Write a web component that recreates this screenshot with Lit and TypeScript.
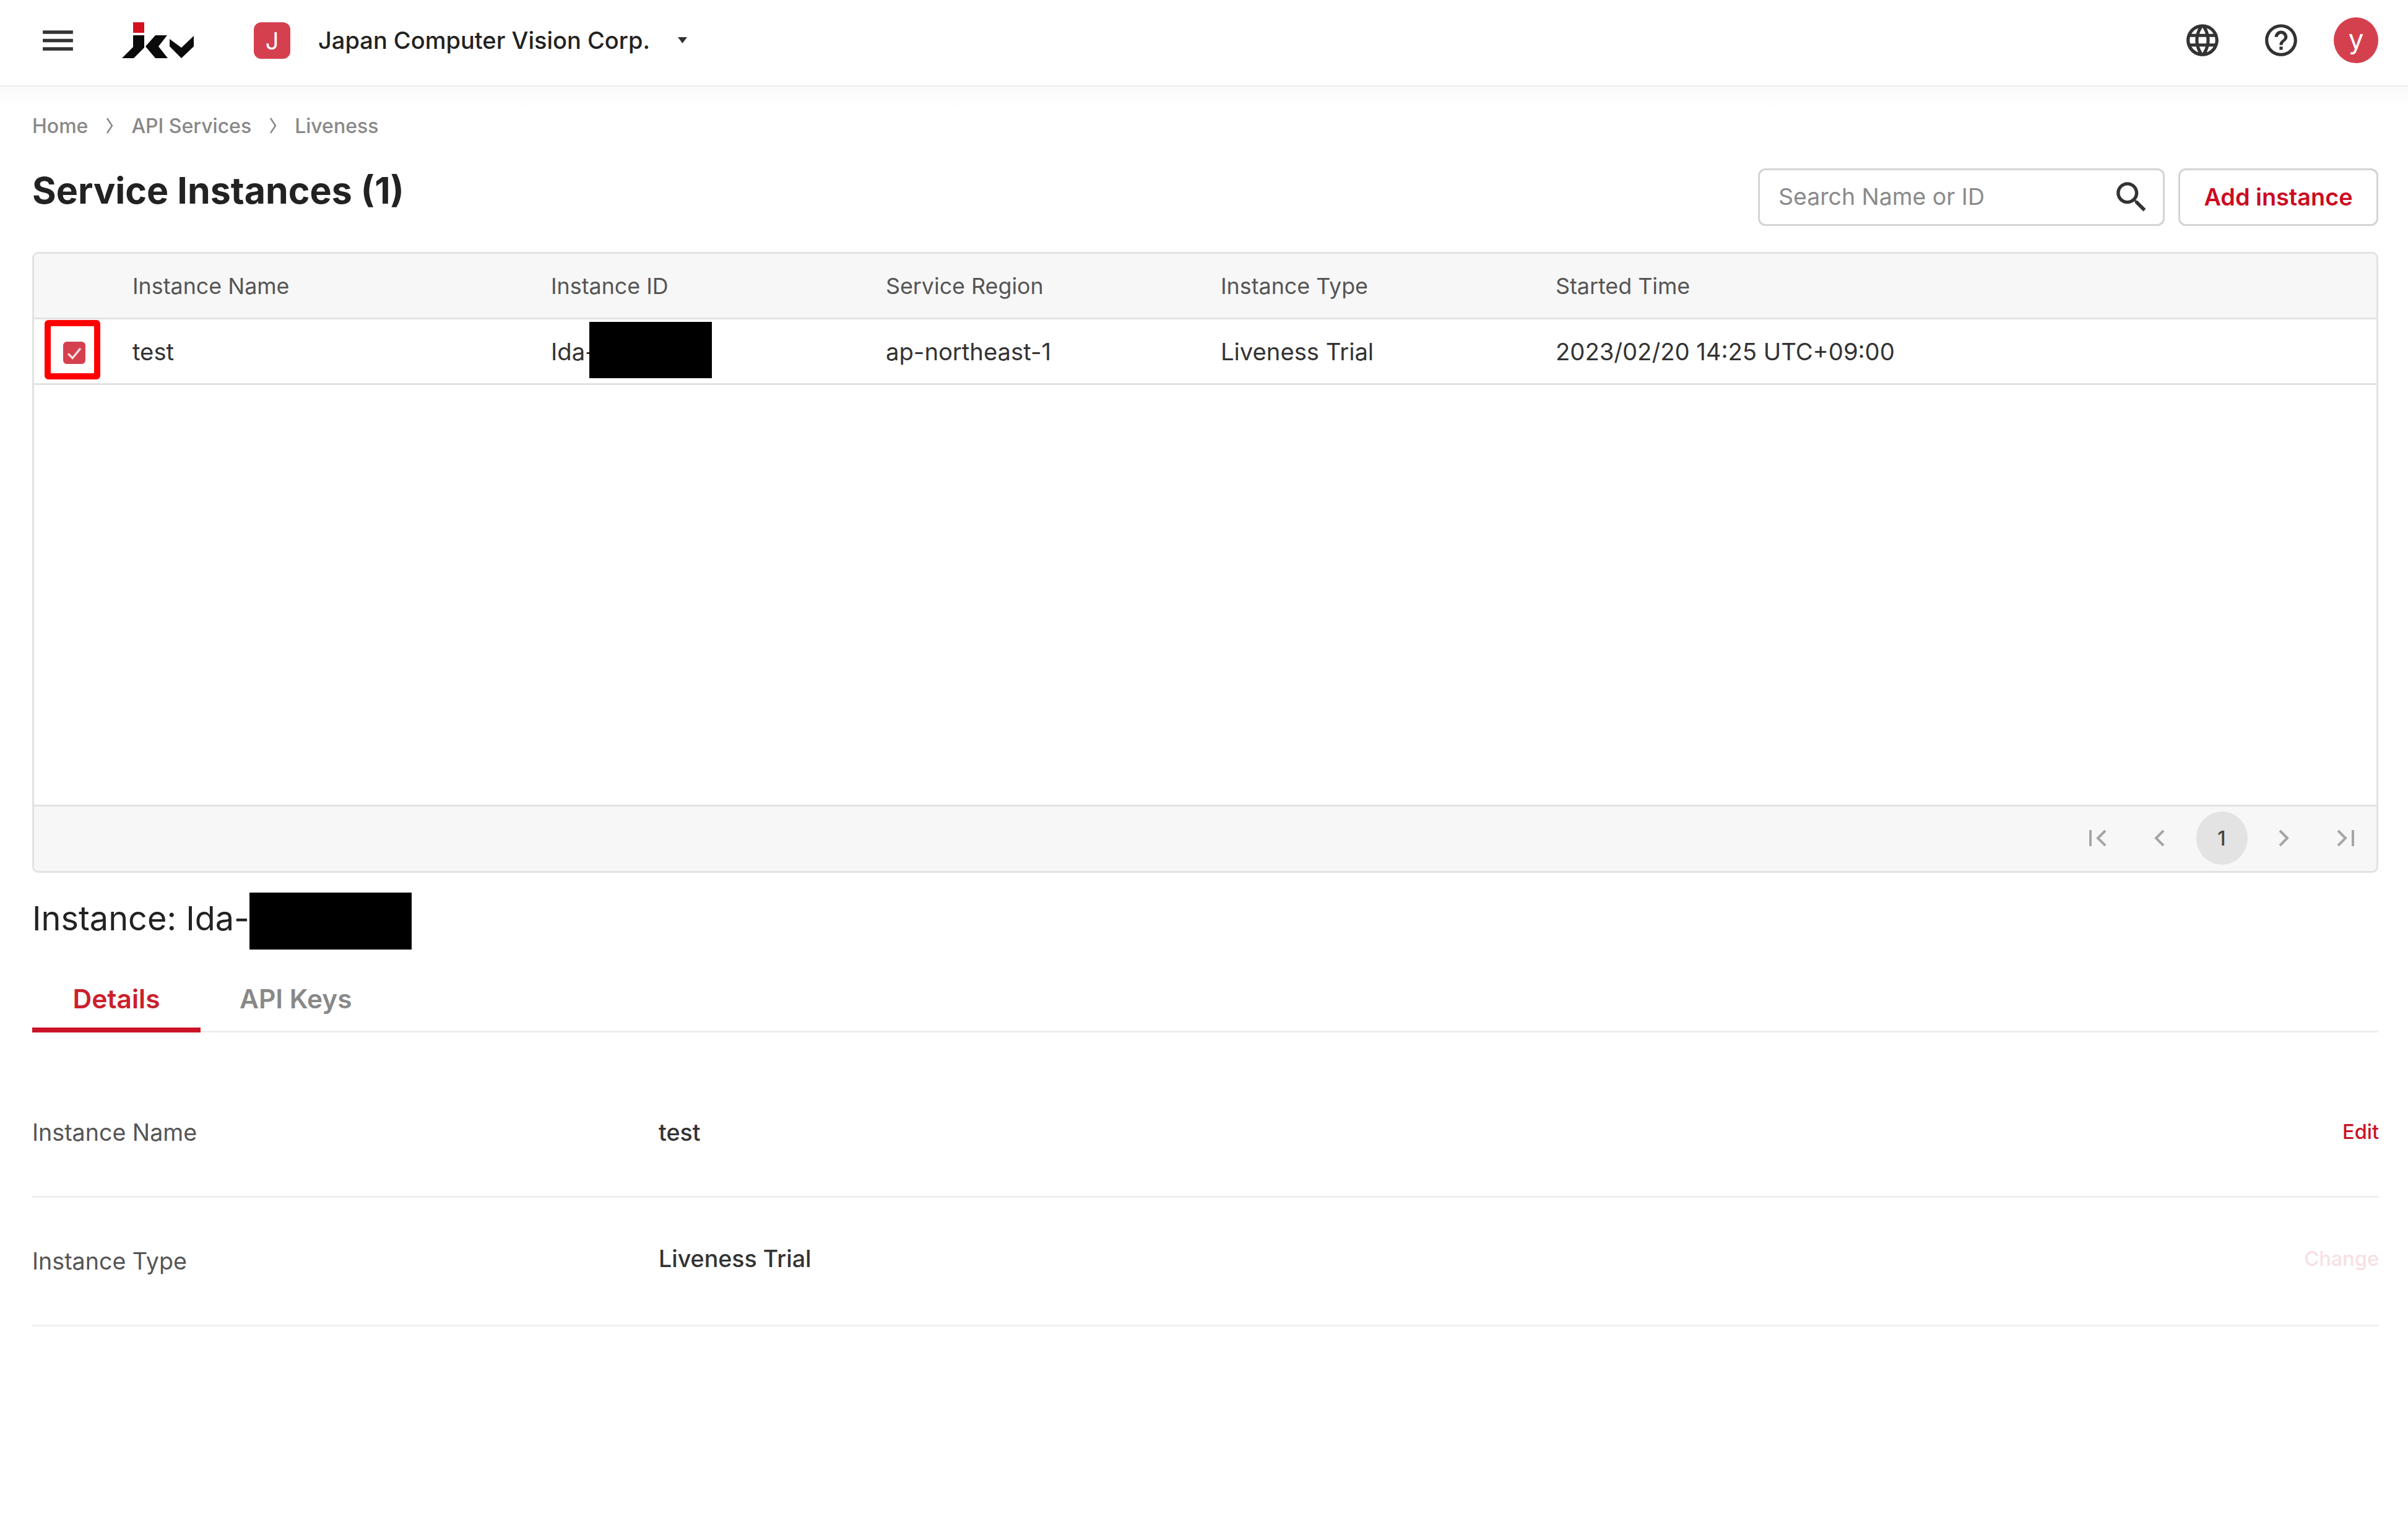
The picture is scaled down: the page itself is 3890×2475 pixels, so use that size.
import { LitElement, html, css, svg } from "lit";
import { customElement } from "lit/decorators.js";

const icon = (d: string, cls: string) =>
  html`<svg class=${cls} viewBox="0 0 24 24" aria-hidden="true"><path d=${d}></path></svg>`;

const MENU = "M3 18h18v-2H3v2zm0-5h18v-2H3v2zm0-7v2h18V6H3z";
const GLOBE = "M11.99 2C6.47 2 2 6.48 2 12s4.47 10 9.99 10C17.52 22 22 17.52 22 12S17.52 2 11.99 2zm6.93 6h-2.95c-.32-1.25-.78-2.45-1.38-3.56 1.84.63 3.37 1.91 4.33 3.56zM12 4.04c.83 1.2 1.48 2.53 1.91 3.96h-3.82c.43-1.43 1.08-2.76 1.91-3.96zM4.26 14C4.1 13.36 4 12.69 4 12s.1-1.36.26-2h3.38c-.08.66-.14 1.32-.14 2 0 .68.06 1.34.14 2H4.26zm.82 2h2.95c.32 1.25.78 2.45 1.38 3.56-1.84-.63-3.37-1.9-4.33-3.56zm2.95-8H5.08c.96-1.66 2.49-2.93 4.33-3.56C8.81 5.55 8.35 6.75 8.03 8zM12 19.96c-.83-1.2-1.48-2.53-1.91-3.96h3.82c-.43 1.43-1.08 2.76-1.91 3.96zM14.34 14H9.66c-.09-.66-.16-1.32-.16-2 0-.68.07-1.35.16-2h4.68c.09.65.16 1.32.16 2 0 .68-.07 1.34-.16 2zm.25 5.56c.6-1.11 1.06-2.31 1.38-3.56h2.95c-.96 1.65-2.49 2.93-4.33 3.56zM16.36 14c.08-.66.14-1.32.14-2 0-.68-.06-1.34-.14-2h3.38c.16.64.26 1.31.26 2s-.1 1.36-.26 2h-3.38z";
const HELP = "M11 18h2v-2h-2v2zm1-16C6.48 2 2 6.48 2 12s4.48 10 10 10 10-4.48 10-10S17.52 2 12 2zm0 18c-4.41 0-8-3.59-8-8s3.59-8 8-8 8 3.59 8 8-3.59 8-8 8zm0-14c-2.21 0-4 1.79-4 4h2c0-1.1.9-2 2-2s2 .9 2 2c0 2-3 1.75-3 5h2c0-2.25 3-2.5 3-5 0-2.21-1.79-4-4-4z";
const SEARCH = "M15.5 14h-.79l-.28-.27C15.41 12.59 16 11.11 16 9.5 16 5.91 13.09 3 9.5 3S3 5.91 3 9.5 5.91 16 9.5 16c1.61 0 3.09-.59 4.23-1.57l.27.28v.79l5 4.99L20.49 19l-4.99-5zm-6 0C7.01 14 5 11.99 5 9.5S7.01 5 9.5 5 14 7.01 14 9.5 11.99 14 9.5 14z";

const COLUMNS = ["Instance Name", "Instance ID", "Service Region", "Instance Type", "Started Time"];

@customElement("app-root")
export class AppRoot extends LitElement {
  static styles = css`
    :host {
      display: block;
      min-height: 2475px;
      background: #fff;
      font-family: Inter, "Noto Sans", sans-serif;
      color: #333;
      font-size: 36px;
    }
    * { box-sizing: border-box; }
    svg { display: block; flex: none; fill: currentColor; }

    .header {
      display: flex;
      align-items: center;
      height: 140px;
      padding: 0 48px 8px 61px;
      border-bottom: 2px solid #ececec;
    }
    .menu { width: 65px; height: 65px; color: #333; }
    .logo { width: 116px; height: 58px; margin-left: 71px; }
    .badge {
      width: 59px; height: 59px; margin-left: 97px; border-radius: 12px;
      background: #d5404f; color: #fff;
      display: flex; align-items: center; justify-content: center;
      font-size: 38px; padding-top: 2px;
    }
    .company { margin-left: 45px; font-size: 38px; font-weight: 500; color: #222; white-space: nowrap; }
    .caret { width: 15px; height: 10px; margin-left: 45px; color: #333; }
    .spacer { flex: 1; }
    .hicon { width: 62px; height: 62px; color: #333; }
    .help { margin-left: 65px; margin-right: 54px; }
    .avatar {
      width: 72px; height: 74px; border-radius: 50%;
      background: #d5404f; color: #fff;
      display: flex; align-items: center; justify-content: center;
      font-size: 44px; padding-bottom: 4px;
    }

    .main {
      padding: 0 48px 0 52px;
      background: linear-gradient(#fafafa, #fff 36px);
    }
    .crumbs {
      height: 132px;
      padding-bottom: 6px;
      display: flex; align-items: center;
      font-size: 32px; font-weight: 500; color: #888;
    }
    .chev { width: 12px; height: 28px; margin: 0 29px; fill: none; stroke: #888; stroke-width: 2.5; }

    .toolbar { display: flex; align-items: flex-start; height: 93px; }
    .title { margin: 0; font-size: 59.1px; line-height: 72px; font-weight: 700; color: #222; flex: 1; }
    .search {
      width: 657px; height: 93px;
      border: 3px solid #d4d4d4; border-radius: 12px;
      display: flex; align-items: center; justify-content: space-between;
      padding: 0 18px 0 30px;
      color: #8a8a8a; font-size: 37.4px;
    }
    .search span { padding-bottom: 3px; }
    .search svg { width: 65px; height: 65px; color: #333; }
    .add {
      width: 323px; height: 93px; margin-left: 22px;
      border: 3px solid #d4d4d4; border-radius: 12px;
      display: flex; align-items: center; justify-content: center;
      color: #cc0a1f; font-size: 37.8px; font-weight: 600;
      padding-bottom: 2px;
    }

    .table {
      margin-top: 42px;
      height: 1003px;
      border: 3px solid #e2e2e2;
      border-radius: 10px;
      display: flex; flex-direction: column;
    }
    .row {
      display: grid;
      grid-template-columns: 159px 676px 541px 541px 541px 1fr;
      align-items: center;
      height: 106px;
      border-bottom: 3px solid #e2e2e2;
    }
    .row.head { background: #f7f7f7; color: #555; border-radius: 8px 8px 0 0; font-size: 35.8px; }
    .row.body { color: #333; font-size: 38.2px; }
    .check-cell {
      position: relative;
      align-self: stretch;
      display: flex; align-items: center;
      padding: 4px 0 0 47px;
    }
    .check {
      width: 36px; height: 36px; border-radius: 6px;
      background: #d5404f; color: #fff;
      display: flex; align-items: center; justify-content: center;
    }
    .check svg { width: 34px; height: 34px; fill: none; stroke: #f7dfe2; stroke-width: 2.4; }
    .mark {
      position: absolute; left: 17px; top: 1px;
      width: 90px; height: 96px;
      border: 10px solid #ff0000; border-radius: 6px;
    }
    .id { display: flex; align-items: center; }
    .id-text { width: 62px; white-space: nowrap; }
    .redact { background: #000; flex: none; }
    .redact.a { width: 198px; height: 91px; margin-bottom: 4px; }
    .redact.b { width: 262px; height: 92px; }
    .empty { flex: 1; }
    .foot {
      height: 107px;
      background: #f7f7f7;
      border-top: 3px solid #e2e2e2;
      border-radius: 0 0 8px 8px;
      display: flex; align-items: center; justify-content: flex-end;
      padding-bottom: 2px;
      color: #a0a0a0;
    }
    .pg { width: 100px; display: flex; justify-content: center; align-items: center; }
    .pg svg { width: 30px; height: 30px; fill: none; stroke: #a5a5a5; stroke-width: 4; }
    .current {
      width: 83px; height: 86px; border-radius: 50%;
      background: #e3e3e3; color: #444; font-size: 32px; font-weight: 500;
      display: flex; align-items: center; justify-content: center;
    }

    .instance {
      margin-top: 32px;
      display: flex; align-items: center;
      font-size: 54px; color: #222;
    }
    .instance-text { width: 351px; white-space: nowrap; padding-bottom: 10px; }

    .tabs {
      margin-top: 26px;
      display: flex;
      border-bottom: 3px solid #eee;
      height: 108px;
    }
    .tab {
      height: 108px;
      display: flex; align-items: center; justify-content: center;
      font-size: 42.5px; font-weight: 600; color: #888;
      padding-bottom: 2px;
    }
    .tab.on { width: 272px; color: #cc1f2d; border-bottom: 8px solid #cc1226; padding: 6px 0 0; }
    .tab.off { margin-left: 63px; }

    .details { margin-top: 59px; margin-right: -1px; font-size: 37.6px; }
    .drow {
      height: 208px;
      border-bottom: 3px solid #f0f0f0;
      display: flex; align-items: center;
    }
    .label { width: 1012px; color: #555; }
    .value { flex: 1; color: #333; font-weight: 500; }
    .action { font-size: 32.5px; font-weight: 500; }
    .action.edit { color: #cc1226; padding-bottom: 3px; }
    .action.change { color: #f7e0e4; padding-bottom: 8px; }
    .value.shift { padding-bottom: 8px; }
  `;

  private logo() {
    return html`<svg class="logo" viewBox="0 0 116 58" aria-label="JCV logo">
      ${svg`<rect x="18" y="0" width="18" height="17" fill="#d3111f"></rect>
      <path fill="#0a0a0a" d="M18 21H36V41L19 58H0L18 40Z"></path>
      <path fill="#0a0a0a" d="M73 21H54L38 39L54 58H74L59 39Z"></path>
      <path fill="#0a0a0a" d="M77 27L96 41L116 22V39L96 58L77 39Z"></path>`}
    </svg>`;
  }

  private chev() {
    return html`<svg class="chev" viewBox="0 0 12 28"><path d="M2 2L10 14L2 26"></path></svg>`;
  }

  render() {
    return html`
      <header class="header">
        ${icon(MENU, "menu")}
        ${this.logo()}
        <div class="badge">J</div>
        <div class="company">Japan Computer Vision Corp.</div>
        <svg class="caret" viewBox="0 0 15 10"><path d="M0 0H15L7.5 10Z"></path></svg>
        <div class="spacer"></div>
        ${icon(GLOBE, "hicon")}
        ${icon(HELP, "hicon help")}
        <div class="avatar">y</div>
      </header>

      <main class="main">
        <nav class="crumbs">
          <span>Home</span>${this.chev()}<span>API Services</span>${this.chev()}<span>Liveness</span>
        </nav>

        <div class="toolbar">
          <h1 class="title">Service Instances (1)</h1>
          <div class="search"><span>Search Name or ID</span>${icon(SEARCH, "")}</div>
          <div class="add">Add instance</div>
        </div>

        <section class="table">
          <div class="row head">
            <div></div>
            ${COLUMNS.map((c) => html`<div>${c}</div>`)}
          </div>
          <div class="row body">
            <div class="check-cell">
              <div class="check"><svg viewBox="0 0 24 24"><path d="M5 13L10 18L19 7"></path></svg></div>
              <div class="mark"></div>
            </div>
            <div>test</div>
            <div class="id"><span class="id-text">Ida-</span><span class="redact a"></span></div>
            <div>ap-northeast-1</div>
            <div>Liveness Trial</div>
            <div>2023/02/20 14:25 UTC+09:00</div>
          </div>
          <div class="empty"></div>
          <div class="foot">
            <div class="pg"><svg viewBox="0 0 30 30"><path d="M3 2V28M27 3L15 15L27 27"></path></svg></div>
            <div class="pg"><svg viewBox="0 0 30 30"><path d="M21 3L9 15L21 27"></path></svg></div>
            <div class="pg"><div class="current">1</div></div>
            <div class="pg"><svg viewBox="0 0 30 30"><path d="M9 3L21 15L9 27"></path></svg></div>
            <div class="pg"><svg viewBox="0 0 30 30"><path d="M3 3L15 15L3 27M27 2V28"></path></svg></div>
          </div>
        </section>

        <div class="instance"><span class="instance-text">Instance: Ida-</span><span class="redact b"></span></div>

        <div class="tabs">
          <div class="tab on">Details</div>
          <div class="tab off">API Keys</div>
        </div>

        <div class="details">
          <div class="drow">
            <div class="label">Instance Name</div>
            <div class="value">test</div>
            <div class="action edit">Edit</div>
          </div>
          <div class="drow">
            <div class="label">Instance Type</div>
            <div class="value shift">Liveness Trial</div>
            <div class="action change">Change</div>
          </div>
        </div>
      </main>
    `;
  }
}
